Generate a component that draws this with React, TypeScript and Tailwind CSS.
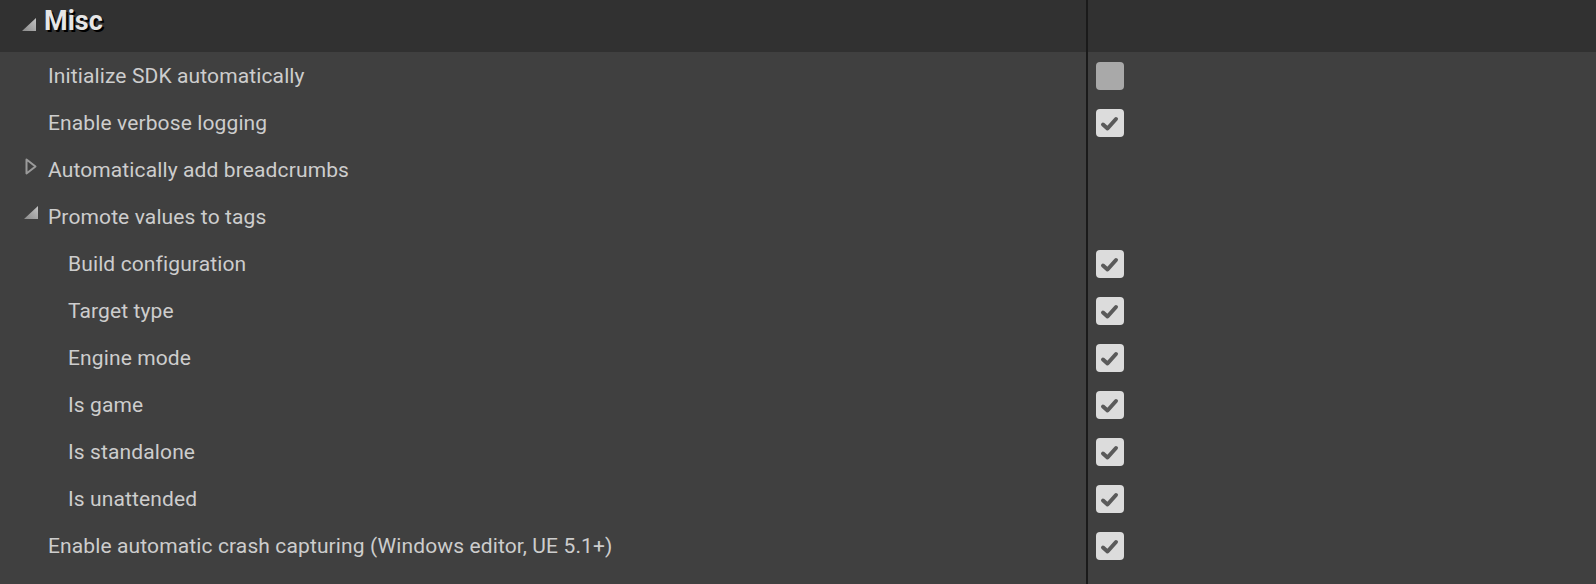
import React from 'react'

interface Row {
  label: string
  depth: 1 | 2
  arrow?: 'open' | 'closed'
  value?: 'on' | 'off'
}

const rows: Row[] = [
  { label: 'Initialize SDK automatically', depth: 1, value: 'off' },
  { label: 'Enable verbose logging', depth: 1, value: 'on' },
  { label: 'Automatically add breadcrumbs', depth: 1, arrow: 'closed' },
  { label: 'Promote values to tags', depth: 1, arrow: 'open' },
  { label: 'Build configuration', depth: 2, value: 'on' },
  { label: 'Target type', depth: 2, value: 'on' },
  { label: 'Engine mode', depth: 2, value: 'on' },
  { label: 'Is game', depth: 2, value: 'on' },
  { label: 'Is standalone', depth: 2, value: 'on' },
  { label: 'Is unattended', depth: 2, value: 'on' },
  { label: 'Enable automatic crash capturing (Windows editor, UE 5.1+)', depth: 1, value: 'on' },
]

function OpenArrow({ className }: { className?: string }) {
  return (
    <svg width="14" height="13" viewBox="0 0 14 13" className={className}>
      <defs>
        <linearGradient id="tri" x1="0" y1="1" x2="1" y2="0">
          <stop offset="0" stopColor="#8a8a8a" />
          <stop offset="1" stopColor="#c4c4c4" />
        </linearGradient>
      </defs>
      <path d="M0 13 L14 13 L14 0 Z" fill="url(#tri)" />
    </svg>
  )
}

function ClosedArrow() {
  return (
    <svg width="12" height="17" viewBox="0 0 12 17">
      <path d="M1.5 1.5 L10.5 8.5 L1.5 15.5 Z" fill="none" stroke="#9a9a9a" strokeWidth="2" strokeLinejoin="round" />
    </svg>
  )
}

function Checkbox({ checked }: { checked: boolean }) {
  return (
    <div
      className={
        'w-[28px] h-[28px] rounded-[4px] flex items-center justify-center ' +
        (checked ? 'bg-[#dcdcdc]' : 'bg-[#a9a9a9]')
      }
    >
      {checked && (
        <svg width="20" height="20" viewBox="0 0 20 20">
          <path
            d="M3 11.5 L7.5 15.5 L16 6"
            fill="none"
            stroke="#5a5a5a"
            strokeWidth="4"
            strokeLinecap="round"
            strokeLinejoin="round"
          />
        </svg>
      )}
    </div>
  )
}

export default function App() {
  return (
    <div
      className="w-[1596px] h-[584px] flex flex-col bg-[#404040] text-[#cdcdcd] overflow-hidden"
      style={{ fontFamily: 'Roboto, "Noto Sans", sans-serif' }}
    >
      <div className="flex h-[52px] bg-[#313131] shrink-0">
        <div className="w-[1088px] border-r-2 border-[#1a1a1a] flex items-start pl-[22px]">
          <OpenArrow className="mt-[18px]" />
          <span className="ml-[8px] pt-[8px] text-[27px] font-bold text-[#e6e6e6] [text-shadow:2px_2px_0_#000] leading-none">
            Misc
          </span>
        </div>
        <div className="flex-1" />
      </div>

      {rows.map((row) => (
        <div key={row.label} className="flex h-[47px] shrink-0">
          <div className="w-[1088px] border-r-2 border-[#1a1a1a] flex items-center relative">
            {row.arrow === 'closed' && (
              <div className="absolute left-[25px] top-[12px]">
                <ClosedArrow />
              </div>
            )}
            {row.arrow === 'open' && (
              <div className="absolute left-[24px] top-[13px]">
                <OpenArrow />
              </div>
            )}
            <span
              className={
                'text-[21px] tracking-[0.12px] pt-[2px] ' + (row.depth === 2 ? 'pl-[68px]' : 'pl-[48px]')
              }
            >
              {row.label}
            </span>
          </div>
          <div className="flex-1 flex items-center pl-[8px]">
            {row.value && <Checkbox checked={row.value === 'on'} />}
          </div>
        </div>
      ))}

      <div className="flex flex-1">
        <div className="w-[1088px] border-r-2 border-[#1a1a1a]" />
        <div className="flex-1" />
      </div>
    </div>
  )
}
